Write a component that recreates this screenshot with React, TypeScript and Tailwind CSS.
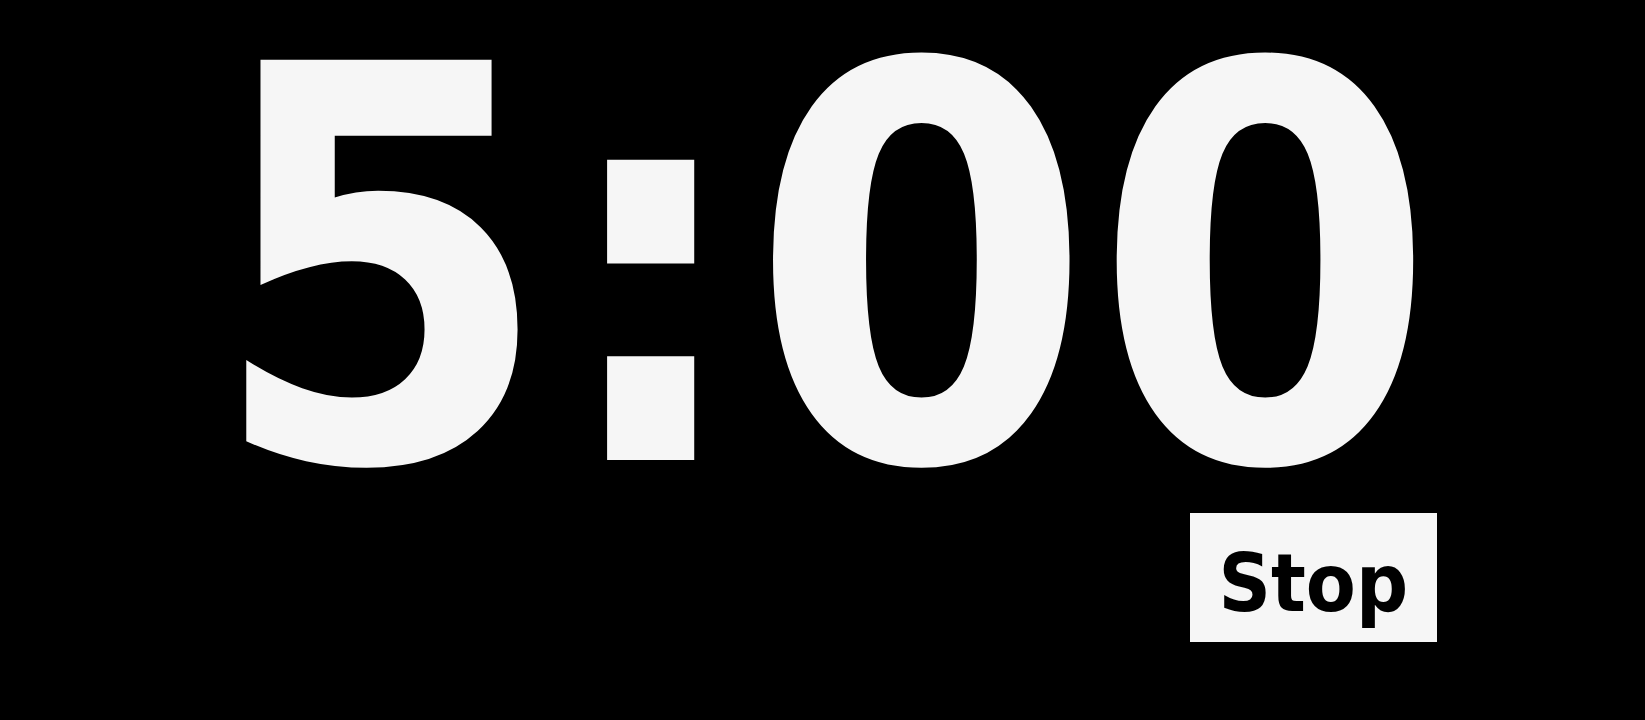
import React from 'react';

export default function App() {
  return (
    <div className="min-h-screen w-full bg-black flex justify-center pt-[27px]" style={{ fontFamily: '"DejaVu Sans Condensed", "DejaVu Sans", sans-serif' }}>
      <div className="inline-flex flex-col items-end">
        <div className="text-[549px] leading-[486px] font-bold text-[#f6f6f6] whitespace-nowrap">5:00</div>
        <button className="w-[247px] h-[129px] bg-[#f6f6f6] text-black text-[81px] leading-none font-bold flex justify-center pt-[30px]">
          Stop
        </button>
      </div>
    </div>
  );
}
